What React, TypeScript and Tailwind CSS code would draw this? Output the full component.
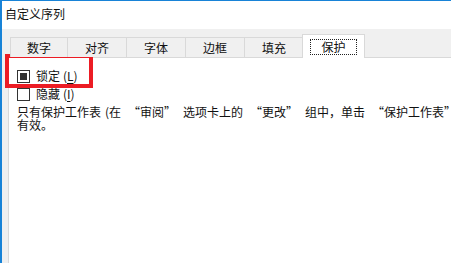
import React from 'react';

const tabs = ['数字', '对齐', '字体', '边框', '填充', '保护'];

function Checkbox({ checked }: { checked?: boolean }) {
  return (
    <span className="flex h-[13px] w-[13px] shrink-0 items-center justify-center border border-[#333333] bg-white">
      {checked && <span className="h-[7px] w-[7px] bg-[#333333]" />}
    </span>
  );
}

// 全角引号：左引号靠右，右引号靠左
const LQ = () => <span className="inline-block w-[19px] text-right">“</span>;
const RQ = () => <span className="inline-block w-[19px] text-left">”</span>;

function Label({ text, k }: { text: string; k: string }) {
  return (
    <span className="leading-[14px]">
      {text}
      <span className="inline-block w-[7px] text-right">(</span>
      <span className="underline underline-offset-2">{k}</span>
      <span className="inline-block w-[7px] text-left">)</span>
    </span>
  );
}

export default function App() {
  const font = { fontFamily: '"Noto Sans CJK SC", "Noto Sans", sans-serif' };

  return (
    <div
      className="relative flex h-[263px] w-[451px] flex-col overflow-hidden border-l-2 border-t border-[#1883d7] bg-[#f0f0f0] text-[12px] text-[#111111]"
      style={font}
    >
      {/* 标题栏 */}
      <div className="h-[28px] shrink-0 bg-white pl-[3px] pt-[5px] leading-[16px]">自定义序列</div>

      <div className="flex flex-1 flex-col pl-[6px] pt-[5px]">
        {/* 选项卡 */}
        <div className="relative z-10 ml-[2px] flex h-[23px] items-end">
          {tabs.map((t, i) => {
            const active = i === tabs.length - 1;
            return active ? (
              <div
                key={t}
                className="-mb-px -ml-[1px] flex h-[24px] w-[63px] items-center justify-center border border-b-0 border-[#d9d9d9] bg-white"
              >
                <span className="border border-dotted border-[#222222] px-[10px] leading-[14px]">{t}</span>
              </div>
            ) : (
              <div
                key={t}
                className={`flex h-[20px] items-center justify-center border border-b-0 border-r-0 border-[#d9d9d9] bg-[#f0f0f0] leading-[14px] ${i === 0 ? 'w-[57px]' : 'w-[59px]'}`}
              >
                {t}
              </div>
            );
          })}
        </div>

        {/* 选项卡内容 */}
        <div className="flex-1 border border-r-0 border-b-0 border-[#d9d9d9] bg-white pl-[8px] pt-[9px]">
          <div className="flex h-[18px] items-center gap-[6px]">
            <Checkbox checked />
            <Label text="锁定" k="L" />
          </div>
          <div className="flex h-[18px] items-center gap-[6px]">
            <Checkbox />
            <Label text="隐藏" k="I" />
          </div>
          <p className="mt-[2px] whitespace-nowrap leading-[13px]">
            只有保护工作表<span className="inline-block w-[8px] text-right">(</span>在<LQ />审阅<RQ />选项卡上的<LQ />更改<RQ />组中，单击<LQ />保护工作表<RQ />按钮)后，锁定单元格或隐藏公式才
            <br />
            有效。
          </p>
        </div>
      </div>

      {/* 红色标注框 */}
      <div className="absolute left-[3px] top-[53px] h-[34px] w-[88px] border-4 border-[#ec1c24]" />
    </div>
  );
}
